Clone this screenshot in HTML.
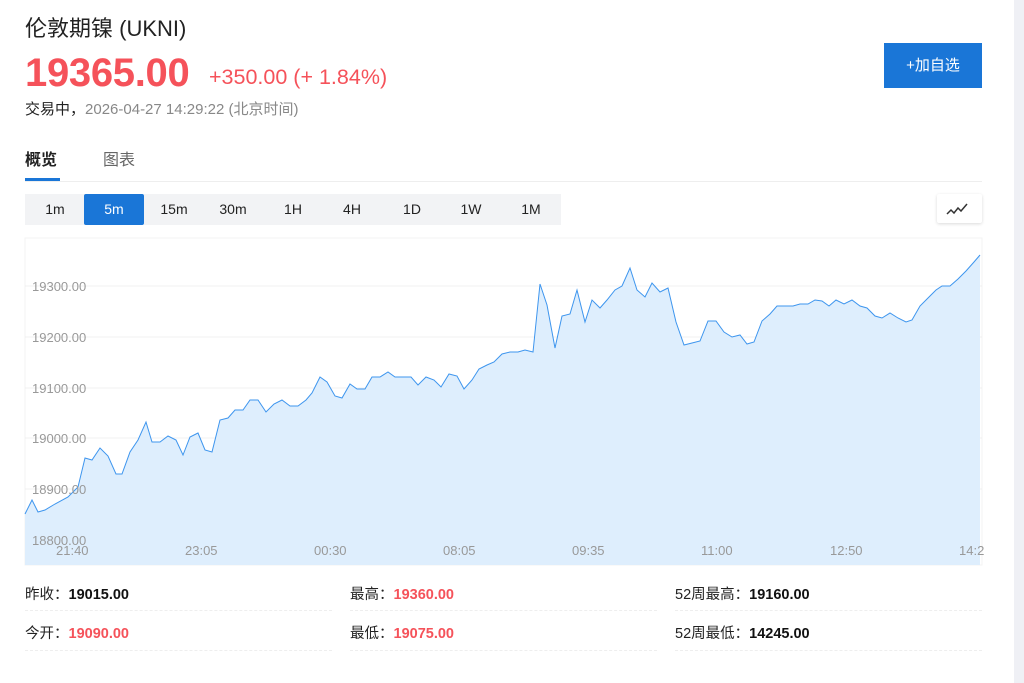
<!DOCTYPE html>
<html><head><meta charset="utf-8"><style>
*{margin:0;padding:0;box-sizing:border-box}
body{width:1024px;height:683px;background:#fff;font-family:"Liberation Sans","Noto Sans CJK SC",sans-serif;position:relative;overflow:hidden}
.a{position:absolute;white-space:nowrap}
.strip{position:absolute;left:1014px;top:0;width:10px;height:683px;background:#eff0f5}
.tf{position:absolute;top:194px;height:31px;width:60px;background:#f2f3f5;font-size:14px;color:#222;text-align:center;line-height:31px}
.lbl{font-size:14.5px;color:#222}
.v{font-weight:bold;font-size:14.5px}
.sep{position:absolute;height:0;border-top:1px dashed #eee}
</style></head><body>
<div class="strip"></div>
<div class="a" style="left:25px;top:11px;font-size:22px;color:#222">伦敦期镍 (UKNI)</div>
<div class="a" style="left:25px;top:51px;font-size:40px;font-weight:bold;color:#f5525a;letter-spacing:-0.3px">19365.00</div>
<div class="a" style="left:209px;top:65px;font-size:21.5px;color:#f5525a">+350.00 (+ 1.84%)</div>
<div class="a" style="left:25px;top:98px;font-size:15px;color:#222">交易中，<span style="color:#888">2026-04-27 14:29:22 (北京时间)</span></div>
<div class="a" style="left:884px;top:43px;width:98px;height:45px;background:#1a76d7;color:#fff;font-size:15px;text-align:center;line-height:45px">+加自选</div>
<div class="a" style="left:25px;top:146px;font-size:16px;font-weight:bold;color:#222">概览</div>
<div class="a" style="left:103px;top:146px;font-size:16px;color:#666">图表</div>
<div class="a" style="left:25px;top:178px;width:35px;height:3px;background:#1a76d7"></div>
<div class="a" style="left:25px;top:181px;width:957px;height:1px;background:#eee"></div>
<div class="tf" style="left:25px">1m</div>
<div class="tf" style="left:84px;background:#1a76d7;color:#fff;border-radius:2px">5m</div>
<div class="tf" style="left:144px">15m</div>
<div class="tf" style="left:203px">30m</div>
<div class="tf" style="left:263px">1H</div>
<div class="tf" style="left:322px">4H</div>
<div class="tf" style="left:382px">1D</div>
<div class="tf" style="left:441px">1W</div>
<div class="tf" style="left:501px">1M</div>
<div class="a" style="left:937px;top:194px;width:45px;height:29px;background:#fff;box-shadow:0 1px 3px rgba(0,0,0,.15);border-radius:2px">
<svg width="45" height="29"><polyline points="10,20 14,16 17,19 21,14 24,17 30,10" fill="none" stroke="#333" stroke-width="1.5"/></svg></div>
<svg class="a" style="left:0;top:0" width="1024" height="683">
<rect x="25" y="238" width="957" height="327" fill="#fff" stroke="#f3f3f3"/>
<g stroke="#f0f0f0"><line x1="25" y1="286" x2="982" y2="286"/><line x1="25" y1="337" x2="982" y2="337"/><line x1="25" y1="388" x2="982" y2="388"/><line x1="25" y1="438" x2="982" y2="438"/><line x1="25" y1="489" x2="982" y2="489"/></g>
<polygon fill="#deeefd" points="25,565 25,514 32,500 38,512 45,510 55,504 68,497 78,487 85,458 92,460 100,448 108,456 116,474 122,474 130,452 138,440 146,422 152,442 160,442 168,436 176,440 183,455 190,437 198,433 205,450 212,452 220,420 228,418 235,410 243,410 250,400 258,400 266,412 274,404 282,400 290,406 298,406 306,400 312,393 320,377 327,382 335,396 342,398 350,384 357,389 365,389 372,377 380,377 388,372 395,377 403,377 411,377 418,385 426,377 434,380 441,387 449,374 457,376 464,389 472,380 479,369 487,365 494,362 502,354 510,352 518,352 525,350 533,352 540,284 547,305 555,348 562,316 570,314 577,290 585,322 592,300 600,308 607,300 615,290 622,286 630,268 637,290 645,297 652,283 660,292 668,288 676,322 684,345 692,343 700,341 708,321 716,321 724,332 732,337 740,335 747,344 754,342 762,321 770,314 777,306 785,306 793,306 800,304 808,304 815,300 822,301 829,306 836,300 844,304 852,300 860,306 867,308 875,316 882,318 890,313 898,318 906,322 912,320 920,306 928,298 936,290 942,286 950,286 958,279 966,271 974,262 980,255 980,565"/>
<polyline fill="none" stroke="#3d95ee" stroke-width="1" points="25,514 32,500 38,512 45,510 55,504 68,497 78,487 85,458 92,460 100,448 108,456 116,474 122,474 130,452 138,440 146,422 152,442 160,442 168,436 176,440 183,455 190,437 198,433 205,450 212,452 220,420 228,418 235,410 243,410 250,400 258,400 266,412 274,404 282,400 290,406 298,406 306,400 312,393 320,377 327,382 335,396 342,398 350,384 357,389 365,389 372,377 380,377 388,372 395,377 403,377 411,377 418,385 426,377 434,380 441,387 449,374 457,376 464,389 472,380 479,369 487,365 494,362 502,354 510,352 518,352 525,350 533,352 540,284 547,305 555,348 562,316 570,314 577,290 585,322 592,300 600,308 607,300 615,290 622,286 630,268 637,290 645,297 652,283 660,292 668,288 676,322 684,345 692,343 700,341 708,321 716,321 724,332 732,337 740,335 747,344 754,342 762,321 770,314 777,306 785,306 793,306 800,304 808,304 815,300 822,301 829,306 836,300 844,304 852,300 860,306 867,308 875,316 882,318 890,313 898,318 906,322 912,320 920,306 928,298 936,290 942,286 950,286 958,279 966,271 974,262 980,255"/>
<g font-family="Liberation Sans" font-size="13" fill="#999">
<text x="32" y="291">19300.00</text><text x="32" y="342">19200.00</text><text x="32" y="393">19100.00</text><text x="32" y="443">19000.00</text><text x="32" y="494">18900.00</text><text x="32" y="545">18800.00</text>
<text x="56" y="555">21:40</text><text x="185" y="555">23:05</text><text x="314" y="555">00:30</text><text x="443" y="555">08:05</text><text x="572" y="555">09:35</text><text x="701" y="555">11:00</text><text x="830" y="555">12:50</text><text x="959" y="555">14:2</text>
</g></svg>
<div class="a lbl" style="left:25px;top:583px">昨收：<span class="v" style="color:#111">19015.00</span></div>
<div class="a lbl" style="left:350px;top:583px">最高：<span class="v" style="color:#f5525a">19360.00</span></div>
<div class="a lbl" style="left:675px;top:583px">52周最高：<span class="v" style="color:#111">19160.00</span></div>
<div class="a lbl" style="left:25px;top:622px">今开：<span class="v" style="color:#f5525a">19090.00</span></div>
<div class="a lbl" style="left:350px;top:622px">最低：<span class="v" style="color:#f5525a">19075.00</span></div>
<div class="a lbl" style="left:675px;top:622px">52周最低：<span class="v" style="color:#111">14245.00</span></div>
<div class="sep" style="left:25px;top:610px;width:307px"></div>
<div class="sep" style="left:350px;top:610px;width:307px"></div>
<div class="sep" style="left:675px;top:610px;width:307px"></div>
<div class="sep" style="left:25px;top:650px;width:307px"></div>
<div class="sep" style="left:350px;top:650px;width:307px"></div>
<div class="sep" style="left:675px;top:650px;width:307px"></div>
</body></html>
